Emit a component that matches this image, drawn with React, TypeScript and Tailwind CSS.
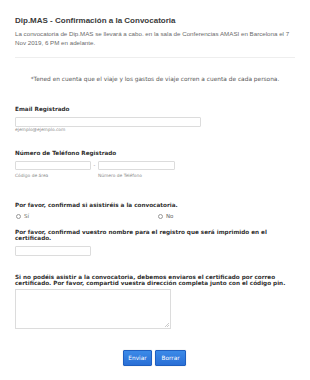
export default function App() {
  const label = "font-['DejaVu_Sans',Verdana,sans-serif] font-bold text-[5.7px] text-[#2f2f2f]";
  const sub = "font-['DejaVu_Sans',Verdana,sans-serif] text-[4.4px] leading-[5px] text-[#8a8a8a]";
  const input = "block h-[9.5px] border border-[#dcdcdc] bg-white rounded-[1px]";
  return (
    <div className="w-[310px] h-[380px] bg-white overflow-hidden">
      <div className="px-[15px] pt-[17px]">
        <div className="font-['Liberation_Sans',Arial,sans-serif] font-bold text-[8px] leading-[8px] text-[#3a3a3a]">
          Dip.MAS - Confirmación a la Convocatoria
        </div>
        <div className="mt-[3.5px] font-['Liberation_Sans',Arial,sans-serif] text-[6.2px] leading-[9px] text-[#6b6b6b]">
          La convocatoria de Dip.MAS se llevará a cabo. en la sala de Conferencias AMASI en Barcelona el 7 Nov 2019, 6 PM en adelante.
        </div>
        <div className="mt-[10.5px] h-px bg-[#eeeeee]" />
        <div className="mt-[17px] text-center font-['DejaVu_Sans',Verdana,sans-serif] text-[5.85px] leading-[8px] text-[#555]">
          *Tened en cuenta que el viaje y los gastos de viaje corren a cuenta de cada persona.
        </div>

        <div className={`mt-[22.5px] leading-[7px] ${label}`}>Email Registrado</div>
        <div className={`mt-[4.5px] w-[186px] ${input}`} />
        <div className={`mt-[0.5px] ${sub}`}>ejemplo@ejemplo.com</div>

        <div className={`mt-[18px] leading-[7px] ${label}`}>Número de Teléfono Registrado</div>
        <div className="mt-[3.5px] flex items-center">
          <div className={`w-[76px] ${input}`} />
          <div className="w-[7px] text-center font-['DejaVu_Sans',sans-serif] text-[5px] leading-[5px] text-[#888]">-</div>
          <div className={`w-[77px] ${input}`} />
        </div>
        <div className="mt-[2.5px] flex">
          <div className={`w-[83px] ${sub}`}>Código de área</div>
          <div className={sub}>Número de Teléfono</div>
        </div>

        <div className={`mt-[24px] leading-[7px] ${label}`}>Por favor, confirmad si asistiréis a la convocatoria.</div>
        <div className="mt-[4px] flex items-center h-[7px] font-['DejaVu_Sans',Verdana,sans-serif] text-[5.5px] leading-[7px] text-[#666]">
          <div className="w-[143px] flex items-center gap-[3px] pl-[1px]">
            <span className="inline-block w-[5px] h-[5px] rounded-full border-[0.6px] border-[#999] bg-white" />
            <span>Sí</span>
          </div>
          <div className="flex items-center gap-[3px]">
            <span className="inline-block w-[5px] h-[5px] rounded-full border-[0.6px] border-[#999] bg-white" />
            <span>No</span>
          </div>
        </div>

        <div className={`mt-[9px] leading-[6.5px] ${label}`}>
          Por favor, confirmad vuestro nombre para el registro que será imprimido en el certificado.
        </div>
        <div className={`mt-[4.25px] w-[76px] h-[10px] ${input}`} />

        <div className={`mt-[17.75px] leading-[6.5px] ${label}`}>
          Si no podéis asistir a la convocatoria, debemos enviaros el certificado por correo certificado. Por favor, compartid vuestra dirección completa junto con el código pin.
        </div>
        <div className="mt-[2.25px] relative w-[156px] h-[40px] border border-[#dcdcdc] bg-white">
          <svg className="absolute right-[1px] bottom-[1px]" width="4" height="4" viewBox="0 0 4 4">
            <path d="M4 0 L0 4 M4 2 L2 4" stroke="#aaa" strokeWidth="0.6" />
          </svg>
        </div>

        <div className="mt-[21px] flex justify-center gap-[3px] pr-[1px]">
          <button className="w-[29px] h-[16px] rounded-[1px] border border-[#1f5fc0] bg-gradient-to-b from-[#3b8ae8] to-[#2a6fd6] text-white font-['DejaVu_Sans',Verdana,sans-serif] text-[5.8px] leading-[14px] shadow-[0_0_1px_rgba(0,0,0,0.3)]">
            Enviar
          </button>
          <button className="w-[31px] h-[16px] rounded-[1px] border border-[#1f5fc0] bg-gradient-to-b from-[#3b8ae8] to-[#2a6fd6] text-white font-['DejaVu_Sans',Verdana,sans-serif] text-[5.8px] leading-[14px] shadow-[0_0_1px_rgba(0,0,0,0.3)]">
            Borrar
          </button>
        </div>
      </div>
    </div>
  );
}
